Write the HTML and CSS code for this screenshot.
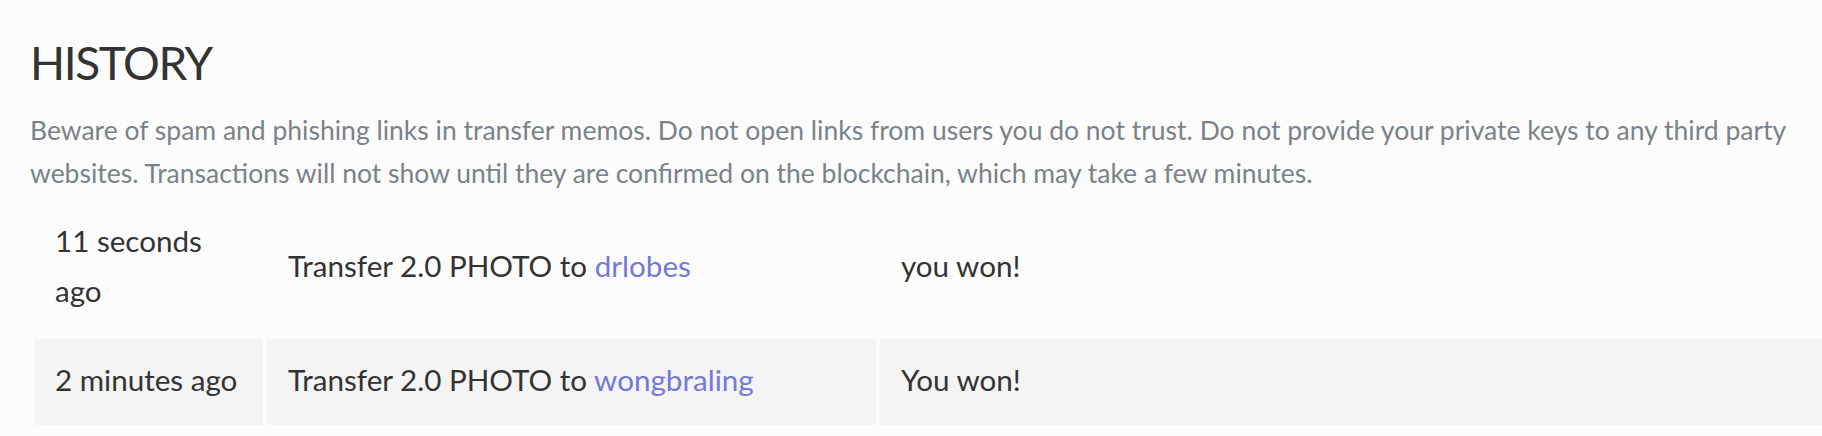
FILE: index.html
```html
<!DOCTYPE html>
<html lang="en">
<head>
<meta charset="utf-8">
<title>History</title>
<link rel="stylesheet" href="styles.css">
</head>
<body>
<section class="history">
  <h2 class="history-title">HISTORY</h2>
  <p class="history-note">Beware of spam and phishing links in transfer memos. Do not open links from users you do not trust. Do not provide your private keys to any third party websites. Transactions will not show until they are confirmed on the blockchain, which may take a few minutes.</p>
  <table class="history-table">
    <tbody>
      <tr class="row">
        <td class="cell cell-time">11 seconds ago</td>
        <td class="cell cell-op">Transfer 2.0 PHOTO to <a class="user" href="#">drlobes</a></td>
        <td class="cell cell-memo">you won!</td>
      </tr>
      <tr class="row row-alt">
        <td class="cell cell-time">2 minutes ago</td>
        <td class="cell cell-op">Transfer 2.0 PHOTO to <a class="user" href="#">wongbraling</a></td>
        <td class="cell cell-memo">You won!</td>
      </tr>
    </tbody>
  </table>
</section>
</body>
</html>
```
FILE: styles.css
```css
html, body {
  margin: 0;
  padding: 0;
  background: #fcfcfc;
  overflow: hidden;
}
body {
  font-family: Lato, "Open Sans", sans-serif;
  color: #333333;
}
.history {
  padding: 35px 0 0 30px;
}
.history-title {
  margin: 0;
  font-size: 46px;
  font-weight: 400;
  letter-spacing: -1.4px;
  line-height: 56px;
  color: #333333;
}
.history-note {
  margin: 18px 0 0 0;
  padding-right: 20px;
  font-size: 26.5px;
  line-height: 42.7px;
  color: #7a8289;
}
.history-table {
  margin-top: 2px;
  width: 1800px;
  border-collapse: separate;
  border-spacing: 4px;
  table-layout: fixed;
}
.cell {
  box-sizing: border-box;
  padding: 16px 21px 20px 21px;
  font-size: 29.6px;
  line-height: 49.4px;
  vertical-align: middle;
  color: #333333;
}
.cell-time { width: 229px; }
.cell-op { width: 609px; }
.row-alt .cell { background: #f4f4f4; }
.user {
  color: #7479d8;
  text-decoration: none;
}
```
